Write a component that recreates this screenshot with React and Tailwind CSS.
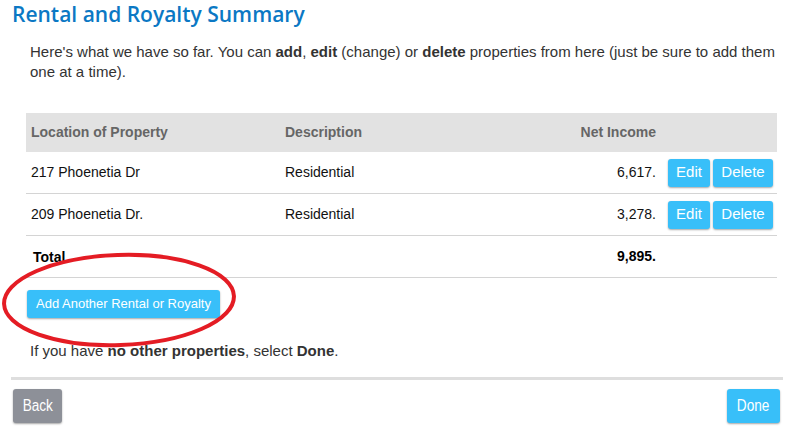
import React from "react";

const rows = [
  { loc: "217 Phoenetia Dr", desc: "Residential", amount: "6,617." },
  { loc: "209 Phoenetia Dr.", desc: "Residential", amount: "3,278." },
];

const Btn = ({ children, className = "" }) => (
  <button
    className={`bg-[#38bff9] text-white rounded-[3px] shadow-[0_1px_2px_rgba(0,0,0,0.35)] ${className}`}
  >
    {children}
  </button>
);

const App = () => {
  return (
    <div className="relative w-[791px] h-[432px] overflow-hidden bg-white font-['Liberation_Sans',Arial,sans-serif]">
      {/* Title */}
      <h1 className="pl-3 text-[21px] leading-[28px] font-semibold text-[#0b78c4] font-['Open_Sans',sans-serif]">
        Rental and Royalty Summary
      </h1>

      {/* Intro */}
      <p className="ml-[30px] mt-[14px] w-[752px] text-[15px] leading-5 text-[#333]">
        Here's what we have so far. You can <b>add</b>, <b>edit</b> (change) or <b>delete</b> properties
        from here (just be sure to add them one at a time).
      </p>

      {/* Table */}
      <div className="ml-[26px] mt-[31px] w-[751px] text-[14px]">
        <div className="flex items-center h-[39px] bg-[#e2e2e2] font-bold text-[#666]">
          <div className="w-[255px] pl-[5px]">Location of Property</div>
          <div className="w-[280px] pl-[4px]">Description</div>
          <div className="w-[99px] pr-[4px] text-right">Net Income</div>
        </div>
        {rows.map((r) => (
          <div key={r.loc} className="flex items-center h-[42px] border-b border-[#d4d4d4] text-[#111]">
            <div className="w-[255px] pl-[5px]">{r.loc}</div>
            <div className="w-[280px] pl-[4px]">{r.desc}</div>
            <div className="w-[99px] pr-[4px] text-right">{r.amount}</div>
            <div className="flex gap-[3px] pl-[8px]">
              <Btn className="w-[42px] h-[28px] text-[15px]">Edit</Btn>
              <Btn className="w-[60px] h-[28px] text-[15px]">Delete</Btn>
            </div>
          </div>
        ))}
        <div className="flex items-center h-[42px] border-b border-[#d4d4d4] font-bold text-black">
          <div className="w-[255px] pl-[7px] pt-[1px]">Total</div>
          <div className="w-[280px]" />
          <div className="w-[99px] pr-[4px] text-right">9,895.</div>
        </div>
      </div>

      {/* Add button */}
      <div className="ml-[27px] mt-[12px]">
        <Btn className="w-[193px] h-[28px] text-[13px]">Add Another Rental or Royalty</Btn>
      </div>

      <p className="ml-[30px] mt-[23px] text-[15px] leading-5 text-[#333]">
        If you have <b>no other properties</b>, select <b>Done</b>.
      </p>

      {/* Footer */}
      <div className="mx-[11px] mt-[16px] w-[772px] border-t-[3px] border-[#dedede] pt-[9px] pl-[2px] pr-[3px] flex justify-between">
        <button className="w-[49px] h-[34px] rounded-[3px] bg-[#8d9098] text-white text-[16px] shadow-[0_1px_2px_rgba(0,0,0,0.35)]">
          <span className="inline-block scale-x-[0.85]">Back</span>
        </button>
        <Btn className="w-[53px] h-[34px] text-[16px]">
          <span className="inline-block scale-x-[0.85]">Done</span>
        </Btn>
      </div>

      {/* Red hand-drawn annotation */}
      <svg className="absolute left-0 top-0 pointer-events-none" width="791" height="432">
        <ellipse
          cx="119"
          cy="300"
          rx="115"
          ry="45"
          fill="none"
          stroke="#e41c24"
          strokeWidth="4"
          transform="rotate(-2 119 300)"
        />
      </svg>
    </div>
  );
};

export default App;
